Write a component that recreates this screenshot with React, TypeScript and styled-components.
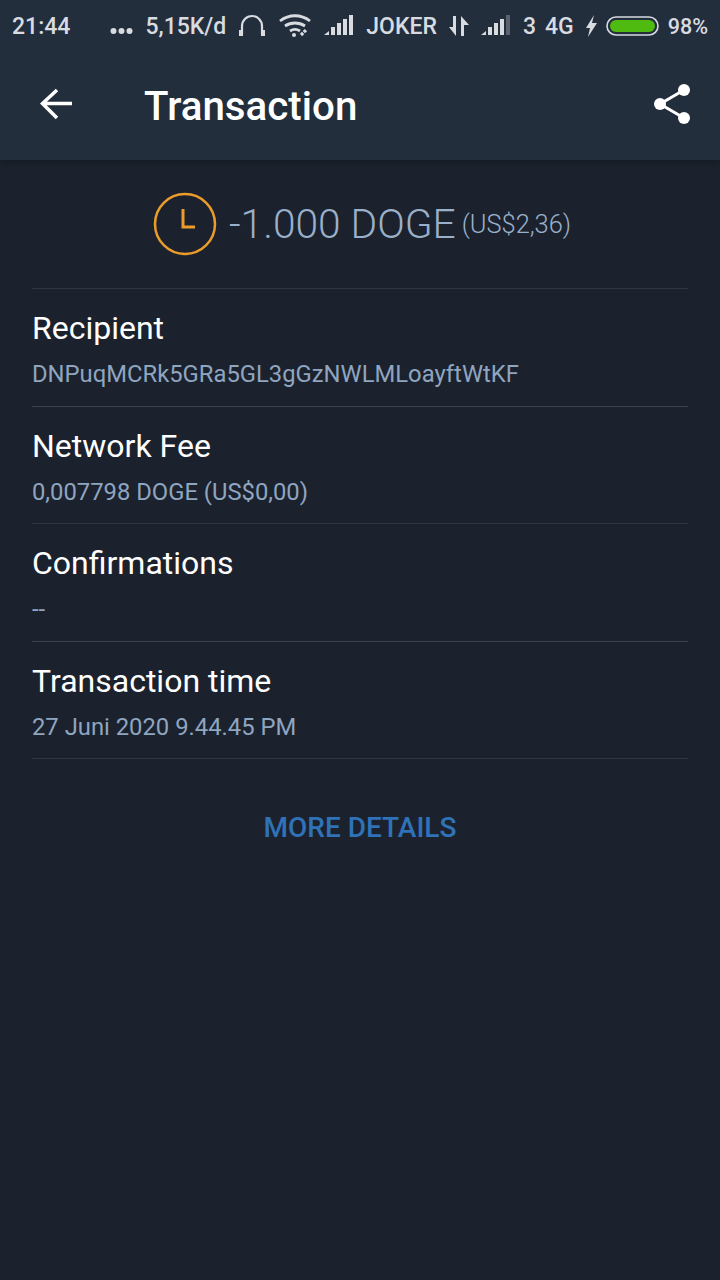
import React from 'react';
import styled, { createGlobalStyle } from 'styled-components';

const GlobalStyle = createGlobalStyle`
  html, body {
    margin: 0;
    padding: 0;
    background: #1b222d;
  }

  * {
    box-sizing: border-box;
  }
`;

const Page = styled.div`
  width: 720px;
  height: 1280px;
  background: #1b222d;
  font-family: Roboto, 'Liberation Sans', sans-serif;
  overflow: hidden;
`;

const Header = styled.header`
  height: 160px;
  background: #232e3d;
  box-shadow: 0 2px 6px rgba(0, 0, 0, 0.25);
`;

const StatusBar = styled.div`
  height: 52px;
  padding: 0 12px;
  display: flex;
  align-items: center;
  justify-content: space-between;
  color: #d8dbe0;
  font-size: 23px;
  font-weight: 500;
`;

const StatusGroup = styled.div<{ $gap?: number }>`
  display: flex;
  align-items: center;
  gap: ${(p) => p.$gap ?? 12}px;
`;

const BatteryText = styled.span`
  font-size: 21.5px;
`;

const Toolbar = styled.div`
  height: 108px;
  padding: 0 28px 0 38px;
  display: flex;
  align-items: center;
`;

const Title = styled.h1`
  margin: 0 0 0 70px;
  flex: 1;
  color: #fff;
  font-size: 40.3px;
  font-weight: 500;
`;

const Amount = styled.div`
  height: 128px;
  padding-left: 4px;
  display: flex;
  align-items: center;
  justify-content: center;
`;

const AmountValue = styled.span`
  margin-left: 12px;
  color: #9ab0ca;
  font-size: 40.7px;
  font-weight: 300;
`;

const AmountFiat = styled.span`
  margin-left: 6px;
  color: #9ab0ca;
  font-size: 25.4px;
  font-weight: 300;
`;

const List = styled.section`
  margin: 0 32px;
  border-top: 1px solid #2f3642;
`;

const Row = styled.div`
  height: 117.5px;
  padding-top: 20px;
  border-bottom: 1px solid #2f3642;

  &:nth-child(odd) {
    border-bottom-color: #39424f;
  }
`;

const Label = styled.div`
  color: #fff;
  font-size: 32px;
  line-height: 38px;
`;

const Value = styled.div`
  margin-top: 13px;
  color: #8fa5c0;
  font-size: 23.8px;
  line-height: 28px;
`;

const MoreDetails = styled.div`
  margin-top: 52px;
  text-align: center;
  color: #2f72b8;
  font-size: 28px;
  font-weight: 500;
`;

const Signal = ({ dim = false }: { dim?: boolean }) => (
  <svg width="30" height="22" viewBox="0 0 30 22" fill="#d8dbe0">
    <polygon points="0,20 5,16 5,20" />
    <rect x="7" y="12" width="4" height="8" />
    <rect x="13" y="8" width="4" height="12" />
    <rect x="19" y="4" width="4" height="16" />
    <rect x="25" y="0" width="4" height="20" opacity={dim ? 0.3 : 1} />
  </svg>
);

const rows = [
  { label: 'Recipient', value: 'DNPuqMCRk5GRa5GL3gGzNWLMLoayftWtKF' },
  { label: 'Network Fee', value: '0,007798 DOGE (US$0,00)' },
  { label: 'Confirmations', value: '--' },
  { label: 'Transaction time', value: '27 Juni 2020 9.44.45 PM' },
];

const App: React.FC = () => (
  <Page>
    <GlobalStyle />
    <Header>
      <StatusBar>
        <span>21:44</span>
        <StatusGroup>
          <svg width="23" height="24" viewBox="0 0 23 24" fill="#d8dbe0">
            <circle cx="3.500" cy="17" r="3" />
            <circle cx="11.500" cy="17" r="3" />
            <circle cx="19.500" cy="17" r="3" />
          </svg>
          <span>5,15K/d</span>
          <svg width="28" height="24" viewBox="0 0 28 24" fill="none" stroke="#d8dbe0" strokeWidth="2.2">
            <path d="M4 20V12a10 10 0 0 1 20 0v8" />
            <path d="M1 16h4v6H1zM23 16h4v6h-4z" fill="#d8dbe0" stroke="none" />
          </svg>
          <svg width="34" height="24" viewBox="0 0 34 24" fill="none" stroke="#d8dbe0" strokeWidth="2.8">
            <path d="M2 7c9-7 21-7 30 0M7 12c6-4 14-4 20 0M12 17c3-2 7-2 10 0" />
            <circle cx="16" cy="21" r="2" fill="#d8dbe0" stroke="none" />
            <path d="M23 21l5-5" strokeWidth="3.2" strokeDasharray="3 1" />
          </svg>
          <Signal />
          <span>JOKER</span>
          <svg width="20" height="22" viewBox="0 0 20 22" fill="#d8dbe0">
            <path d="M0 12h4V1h3v20zM12 21V1l8 9h-5v11z" />
          </svg>
          <Signal dim />
          <StatusGroup $gap={9}>
            <span>3</span>
            <span>4G</span>
          </StatusGroup>
          <StatusGroup $gap={9}>
            <svg width="11" height="22" viewBox="0 0 11 22" fill="#d8dbe0">
              <path d="M8 0 0 13h4l-2 9 9-14H6z" />
            </svg>
            <svg width="53" height="20" viewBox="0 0 53 20">
              <rect x="1" y="1" width="51" height="18" rx="9" fill="none" stroke="#d8dbe0" strokeWidth="1.6" />
              <rect x="4" y="4" width="45" height="12" rx="6" fill="#4fba0f" />
            </svg>
            <BatteryText>98%</BatteryText>
          </StatusGroup>
        </StatusGroup>
      </StatusBar>
      <Toolbar>
        <svg width="36" height="36" viewBox="0 0 36 36" fill="none" stroke="#fff" strokeWidth="3.5">
          <path d="M34 15.500H4M19 2 4.500 15.500 19 30" />
        </svg>
        <Title>Transaction</Title>
        <svg width="38" height="44" viewBox="0 0 38 44" fill="#fff" stroke="none">
          <path d="M30 6 6 20l24 14" fill="none" stroke="#fff" strokeWidth="3" />
          <circle cx="30" cy="6" r="6" />
          <circle cx="6" cy="20" r="6" />
          <circle cx="30" cy="34" r="6" />
        </svg>
      </Toolbar>
    </Header>
    <Amount>
      <svg width="64" height="64" viewBox="0 0 64 64" fill="none" stroke="#eb9c2d" strokeWidth="2.5">
        <circle cx="32" cy="32" r="30" />
        <path d="M30 17v18h12" strokeWidth="3" />
      </svg>
      <AmountValue>-1.000 DOGE</AmountValue>
      <AmountFiat>(US$2,36)</AmountFiat>
    </Amount>
    <List>
      {rows.map((row) => (
        <Row key={row.label}>
          <Label>{row.label}</Label>
          <Value>{row.value}</Value>
        </Row>
      ))}
    </List>
    <MoreDetails>MORE DETAILS</MoreDetails>
  </Page>
);

export default App;
